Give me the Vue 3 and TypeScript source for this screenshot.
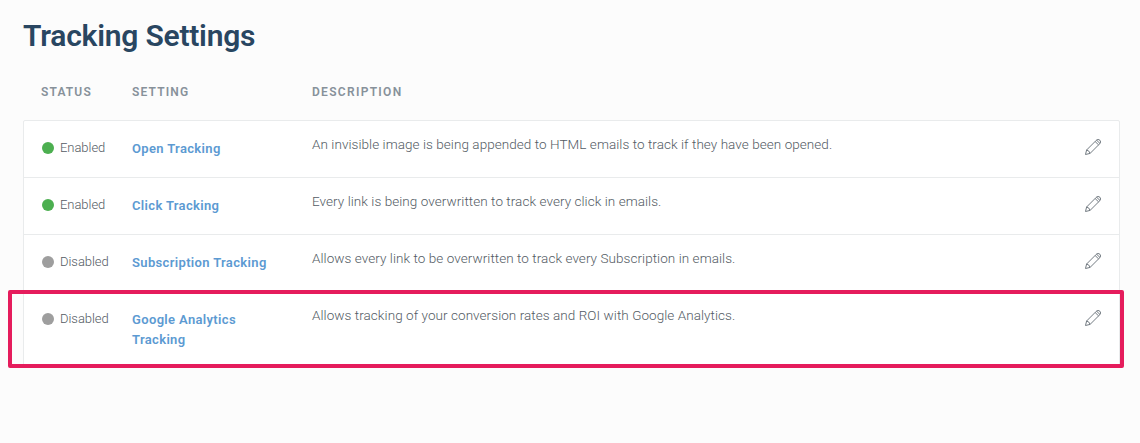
<script setup lang="ts">
interface TrackingSetting {
  enabled: boolean
  name: string
  description: string
  key: string
}

const settings: TrackingSetting[] = [
  { key: 'open', enabled: true, name: 'Open Tracking', description: 'An invisible image is being appended to HTML emails to track if they have been opened.' },
  { key: 'click', enabled: true, name: 'Click Tracking', description: 'Every link is being overwritten to track every click in emails.' },
  { key: 'subscription', enabled: false, name: 'Subscription Tracking', description: 'Allows every link to be overwritten to track every Subscription in emails.' },
  { key: 'analytics', enabled: false, name: 'Google Analytics Tracking', description: 'Allows tracking of your conversion rates and ROI with Google Analytics.' },
]
</script>

<template>
  <main class="page">
    <h1>Tracking Settings</h1>
    <div class="grid head">
      <span class="h-status">Status</span>
      <span class="h-setting">Setting</span>
      <span class="h-desc">Description</span>
    </div>
    <div class="table">
      <div v-for="s in settings" :key="s.key" class="grid row" :class="s.key">
        <div class="status"><i class="dot" :class="{ on: s.enabled }"></i><span>{{ s.enabled ? 'Enabled' : 'Disabled' }}</span></div>
        <a class="name">{{ s.name }}</a>
        <p class="desc">{{ s.description }}</p>
        <svg class="pencil" viewBox="0 0 18 18" width="18" height="18">
          <path d="M1.5 16.5 2.6 12 12.2 2.4Q14 .5 15.9 2.2 17.5 4 15.7 5.8L6.1 15.4ZM2.6 12Q5.3 12.5 6.1 15.4M11.1 3.5 14.6 6.9M12.5 2.1 16 5.5" />
        </svg>
        <div v-if="s.key === 'analytics'" class="highlight"></div>
      </div>
    </div>
  </main>
</template>

<style>
body {
  background: #fcfcfc;
}
</style>

<style scoped>
.page {
  box-sizing: border-box;
  height: 443px;
  padding: 18px 20px 0 23px;
  font-family: Roboto, "Liberation Sans", sans-serif;
  color: #535b64;
}
h1 {
  margin: 0;
  height: 36px;
  font-size: 30px;
  line-height: 36px;
  font-weight: 600;
  letter-spacing: -0.22px;
  color: #294661;
}
.grid {
  display: grid;
  grid-template-columns: 91px 180px 1fr 50px;
  padding-left: 17px;
}
.head {
  height: 66px;
  padding-left: 18px;
  padding-top: 28px;
  box-sizing: border-box;
  font-size: 12px;
  line-height: 20px;
  font-weight: 600;
  letter-spacing: 1.15px;
  text-transform: uppercase;
  color: #87919a;
}
.h-desc {
  letter-spacing: 1.3px;
}
.table {
  border: 1px solid #e9ebec;
  border-radius: 2px;
  background: #fff;
}
.row {
  position: relative;
  box-sizing: border-box;
  height: 57px;
  border-bottom: 1px solid #e9ebec;
}
.row:last-child {
  height: 74px;
  border-bottom: 0;
}
.status {
  display: flex;
  align-items: center;
  height: 20px;
  padding: 17px 0 0 1px;
  font-size: 13px;
  line-height: 18px;
  font-weight: 300;
}
.status span {
  letter-spacing: -0.05px;
}
.dot {
  width: 12px;
  height: 12px;
  margin-right: 6px;
  border-radius: 50%;
  background: #9e9e9e;
}
.dot.on {
  background: #4caf50;
}
.name {
  padding: 18px 30px 0 0;
  font-size: 13px;
  line-height: 20px;
  font-weight: 600;
  letter-spacing: 0.35px;
  color: #5c9ad2;
}
.desc {
  margin: 0;
  padding-top: 13px;
  font-size: 13.5px;
  line-height: 20px;
  font-weight: 300;
  letter-spacing: 0.06px;
}
.pencil {
  margin-top: 17px;
  margin-left: 15px;
  fill: none;
  stroke: #737b82;
  stroke-width: 1;
}
.highlight {
  position: absolute;
  box-sizing: border-box;
  top: -2px;
  left: -16px;
  width: 1116px;
  height: 78px;
  border: 4px solid #e51c5c;
  border-radius: 2px;
}
</style>
